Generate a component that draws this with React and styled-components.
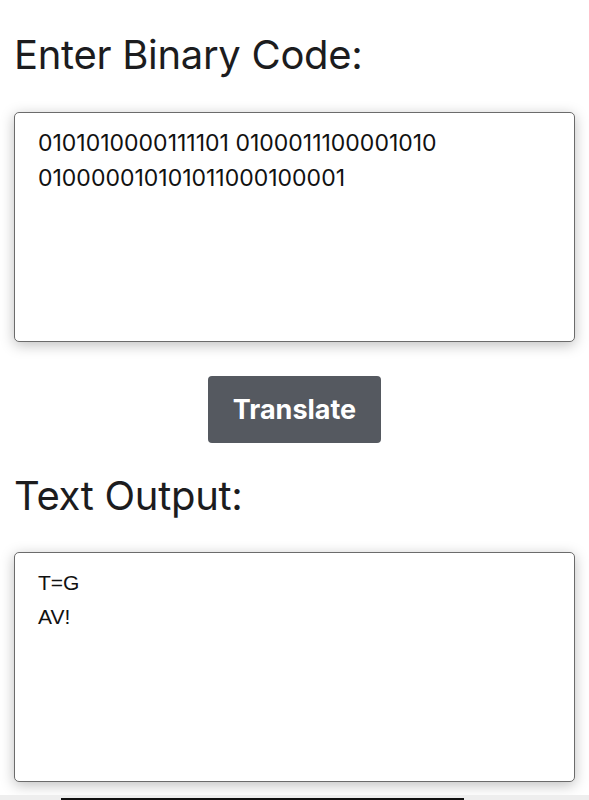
import styled, { createGlobalStyle } from 'styled-components'

const GlobalStyle = createGlobalStyle`
  html, body {
    margin: 0;
    padding: 0;
    background: #ffffff;
    font-family: Inter, "Liberation Sans", Arial, sans-serif;
    color: #1c1c1e;
  }
`

const Page = styled.main`
  display: flex;
  flex-flow: column;
  padding: 0 14px;
  height: 795px;
  box-sizing: border-box;
  overflow: hidden;
`

const Heading = styled.h2`
  margin: ${({ $top }) => $top} 0 0;
  font-size: 40px;
  font-weight: 400;
  line-height: 48px;
  letter-spacing: -0.3px;
  color: #1c1c1e;
`

const Box = styled.div`
  margin-top: ${({ $top }) => $top};
  height: 230px;
  flex-shrink: 0;
  box-sizing: border-box;
  border: 1px solid #6b6b6b;
  border-radius: 5px;
  background: #fff;
  box-shadow: 0 3px 14px rgba(0, 0, 0, 0.26);
  padding: 13px 23px;
  font-family: ${({ $plain }) => ($plain ? '"Liberation Sans", Arial, sans-serif' : 'Inter, "Liberation Sans", sans-serif')};
  font-size: ${({ $plain }) => ($plain ? '21px' : '23px')};
  line-height: ${({ $plain }) => ($plain ? '34px' : '35px')};
  color: #111;

  p {
    margin: 0;
  }
`

const ButtonRow = styled.div`
  display: flex;
  justify-content: center;
  margin-top: 34px;
`

const Button = styled.button`
  width: 173px;
  height: 67px;
  border: 0;
  border-radius: 4px;
  background: #555960;
  color: #fff;
  font-family: Inter, "Liberation Sans", Arial, sans-serif;
  font-size: 27px;
  font-weight: 700;
`

const HomeBar = styled.div`
  height: 5px;
  background: #eeeeee;
  display: flex;
  justify-content: center;
  align-items: flex-end;

  &::after {
    content: '';
    width: 403px;
    height: 2px;
    background: #111;
    margin-left: -65px;
  }
`

export default function App() {
  return (
    <>
      <GlobalStyle />
      <Page>
        <Heading $top="31px">Enter Binary Code:</Heading>
        <Box $top="33px">
          <p>0101010000111101 0100011100001010</p>
          <p>010000010101011000100001</p>
        </Box>
        <ButtonRow>
          <Button type="button">Translate</Button>
        </ButtonRow>
        <Heading $top="29px">Text Output:</Heading>
        <Box $top="32px" $plain>
          <p>T=G</p>
          <p>AV!</p>
        </Box>
      </Page>
      <HomeBar />
    </>
  )
}
